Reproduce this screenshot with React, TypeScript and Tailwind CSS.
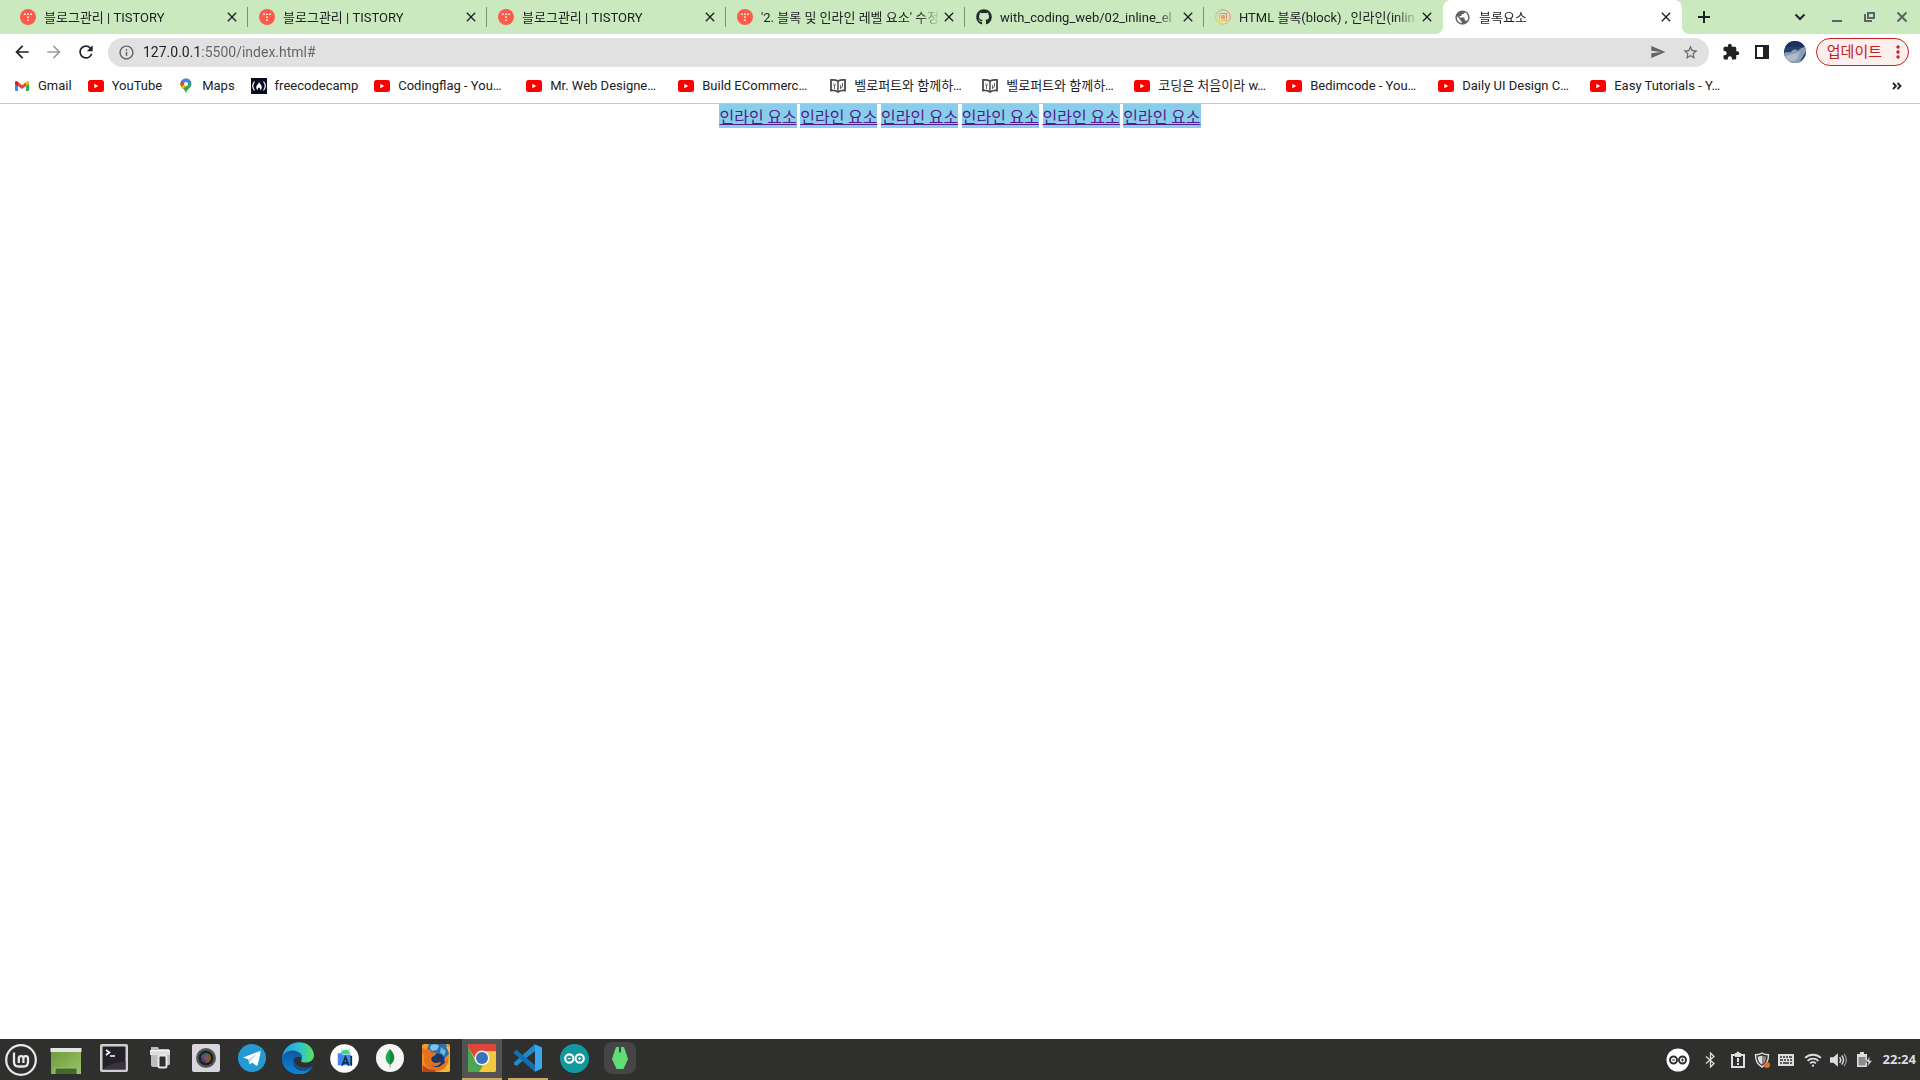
import { useState } from 'react';
import type { ReactNode } from 'react';
import clsx from 'clsx';
import { FaGithub } from 'react-icons/fa';
import {
    MdArrowBack,
    MdArrowForward,
    MdClose,
    MdExtension,
    MdInfoOutline,
    MdPublic,
    MdRefresh,
    MdSend,
    MdStarBorder,
} from 'react-icons/md';

interface Tab {
    title: string;
    icon: ReactNode;
}

interface Bookmark {
    title: string;
    icon: ReactNode;
}

const tabs: Tab[] = [
    { title: '블로그관리 | TISTORY', icon: <TistoryIcon /> },
    { title: '블로그관리 | TISTORY', icon: <TistoryIcon /> },
    { title: '블로그관리 | TISTORY', icon: <TistoryIcon /> },
    { title: "'2. 블록 및 인라인 레벨 요소' 수정", icon: <TistoryIcon /> },
    { title: 'with_coding_web/02_inline_el', icon: <FaGithub className="size-4 text-[#24292f]" /> },
    { title: 'HTML 블록(block) , 인라인(inlin', icon: <ChipIcon /> },
    { title: '블록요소', icon: <MdPublic className="size-[17px] text-[#5f6368]" /> },
];

const bookmarks: Bookmark[] = [
    { title: 'Gmail', icon: <GmailIcon /> },
    { title: 'YouTube', icon: <YoutubeIcon /> },
    { title: 'Maps', icon: <MapsIcon /> },
    { title: 'freecodecamp', icon: <FreeCodeCampIcon /> },
    { title: 'Codingflag - You…', icon: <YoutubeIcon /> },
    { title: 'Mr. Web Designe…', icon: <YoutubeIcon /> },
    { title: 'Build ECommerc…', icon: <YoutubeIcon /> },
    { title: '벨로퍼트와 함께하…', icon: <BookIcon /> },
    { title: '벨로퍼트와 함께하…', icon: <BookIcon /> },
    { title: '코딩은 처음이라 w…', icon: <YoutubeIcon /> },
    { title: 'Bedimcode - You…', icon: <YoutubeIcon /> },
    { title: 'Daily UI Design C…', icon: <YoutubeIcon /> },
    { title: 'Easy Tutorials - Y…', icon: <YoutubeIcon /> },
];

const apps = [
    { name: 'Terminal', icon: <TerminalIcon /> },
    { name: 'Files', icon: <FilesIcon /> },
    { name: 'Camera', icon: <CameraIcon /> },
    { name: 'Telegram', icon: <TelegramIcon /> },
    { name: 'Edge', icon: <EdgeIcon /> },
    { name: 'Android Studio', icon: <AndroidStudioIcon /> },
    { name: 'MongoDB Compass', icon: <MongoIcon /> },
    { name: 'Firefox', icon: <FirefoxIcon /> },
    { name: 'Chrome', icon: <ChromeIcon />, running: true, focused: true },
    { name: 'Visual Studio Code', icon: <VscodeIcon />, running: true },
    { name: 'Arduino', icon: <ArduinoIcon /> },
    { name: 'Mongo Robo', icon: <PlugIcon /> },
];

export default function App() {
    return (
        <div className="flex min-h-screen flex-col bg-white font-[Roboto,'Noto_Sans_CJK_KR',sans-serif] text-[13px] text-[#202124]">
            <TabStrip />
            <Toolbar />
            <BookmarksBar />
            <PageContent />
            <Taskbar />
        </div>
    );
}

function TabStrip() {
    const [active, setActive] = useState(6);

    return (
        <header className="flex h-[34px] items-center bg-[#cbe9bf] pl-[9px]">
            {tabs.map((tab, i) => (
                <div
                    key={i}
                    className={clsx(
                        'relative flex h-full min-w-0 basis-[239px] items-center pr-2 pl-[11px]',
                        i === active && 'rounded-t-lg bg-white'
                    )}
                >
                    <button onClick={() => setActive(i)} className="flex min-w-0 flex-1 items-center gap-2 text-left">
                        <span className="shrink-0">{tab.icon}</span>
                        <span className="flex-1 overflow-hidden mask-r-from-[calc(100%-24px)] pt-px leading-5 whitespace-nowrap">
                            {tab.title}
                        </span>
                    </button>
                    <button aria-label="탭 닫기" className="shrink-0">
                        <MdClose className="size-4" />
                    </button>
                    {i < active - 1 && <span className="absolute top-[7px] right-0 h-5 w-px bg-[#7f8f79]" />}
                    {i === active && (
                        <>
                            <span className="absolute bottom-0 -left-2 size-2 bg-[radial-gradient(circle_at_0_0,transparent_8px,white_8px)]" />
                            <span className="absolute -right-2 bottom-0 size-2 bg-[radial-gradient(circle_at_100%_0,transparent_8px,white_8px)]" />
                        </>
                    )}
                </div>
            ))}
            <button aria-label="새 탭" className="ml-[15px]">
                <svg viewBox="0 0 14 14" className="size-[14px]" stroke="currentColor" strokeWidth="2">
                    <path d="M7 1v12M1 7h12" />
                </svg>
            </button>
            <div className="ml-auto flex items-center gap-4 pr-2.5 text-[#5f6368]">
                <button aria-label="탭 검색" className="mr-1.5 text-[#202124]">
                    <svg viewBox="0 0 16 16" className="size-4" fill="none" stroke="currentColor" strokeWidth="2">
                        <path d="M3.5 5.5 8 10l4.5-4.5" />
                    </svg>
                </button>
                <button aria-label="최소화">
                    <svg viewBox="0 0 16 16" className="size-4" fill="currentColor">
                        <path d="M2 11h10v2H2z" />
                    </svg>
                </button>
                <button aria-label="이전 크기로 복원">
                    <svg viewBox="0 0 16 16" className="size-4" fill="none" stroke="currentColor" strokeWidth="2">
                        <path d="M6 4h6v5H6zM3 5v7h7" />
                    </svg>
                </button>
                <button aria-label="닫기">
                    <svg viewBox="0 0 16 16" className="size-4" fill="none" stroke="currentColor" strokeWidth="2">
                        <path d="m3.500 3.500 9 9m0-9-9 9" />
                    </svg>
                </button>
            </div>
        </header>
    );
}

function Toolbar() {
    const [url, setUrl] = useState('127.0.0.1:5500/index.html#');

    return (
        <div className="flex h-9 items-center pr-[11px] pl-3">
            <nav className="flex gap-3">
                <button aria-label="뒤로">
                    <MdArrowBack className="size-5" />
                </button>
                <button aria-label="앞으로" className="text-[#9e9e9e]">
                    <MdArrowForward className="size-5" />
                </button>
                <button aria-label="새로고침">
                    <MdRefresh className="size-5" />
                </button>
            </nav>
            <div className="ml-3 flex h-[29px] flex-1 items-center rounded-full bg-[#e1e1e1] px-2.5 text-[#5f6368]">
                <MdInfoOutline className="size-[17px] shrink-0" />
                <input
                    aria-label="주소창"
                    value={url}
                    onChange={(e) => setUrl(e.target.value)}
                    className="ml-2 min-w-0 flex-1 bg-[linear-gradient(90deg,#202124_56px,#5f6368_56px)] bg-clip-text text-sm text-transparent caret-black outline-none"
                />
                <button aria-label="공유">
                    <MdSend className="size-4" />
                </button>
                <button aria-label="북마크에 추가" className="ml-4">
                    <MdStarBorder className="size-[17px]" />
                </button>
            </div>
            <div className="flex items-center gap-3.5 pl-[13px]">
                <button aria-label="확장 프로그램">
                    <MdExtension className="size-[18px]" />
                </button>
                <button aria-label="측면 패널">
                    <svg viewBox="0 0 16 16" className="size-4">
                        <path fill="currentColor" fillRule="evenodd" d="M1 1h14v14H1zM3 3v10h6V3z" />
                    </svg>
                </button>
                <button aria-label="프로필">
                    <AvatarIcon />
                </button>
            </div>
            <button className="ml-2.5 flex h-7 items-center gap-3.5 rounded-full border border-[#c5221f] bg-[#fcefee] pr-2 pl-2.5 text-[15px] text-[#c5221f]">
                업데이트
                <svg viewBox="0 0 4 14" className="h-[14px] w-1" fill="currentColor">
                    <circle cx="2" cy="2" r="1.700" />
                    <circle cx="2" cy="7" r="1.700" />
                    <circle cx="2" cy="12" r="1.700" />
                </svg>
            </button>
        </div>
    );
}

function BookmarksBar() {
    return (
        <div className="flex h-[34px] items-center border-b border-[#c8c8c8] pr-[18px] pb-0.5 pl-3.5">
            <ul className="flex min-w-0 flex-1 gap-4 overflow-hidden whitespace-nowrap">
                {bookmarks.map((b, i) => (
                    <li key={i}>
                        <a href="#" className="flex items-center gap-2 leading-5">
                            {b.icon}
                            <span className={clsx(b.title.endsWith('…') && 'w-28')}>{b.title}</span>
                        </a>
                    </li>
                ))}
            </ul>
            <button aria-label="북마크 더보기">
                <svg viewBox="0 0 10 8" className="h-2 w-2.5" fill="none" stroke="currentColor" strokeWidth="1.800">
                    <path d="m1 1 3 3-3 3M5.500 1l3 3-3 3" />
                </svg>
            </button>
        </div>
    );
}

function PageContent() {
    return (
        <main className="flex-1 text-center font-['Noto_Sans_CJK_KR',sans-serif] text-base leading-6">
            {Array.from({ length: 6 }, (_, i) => (
                <span key={i}>
                    <a href="#" className="bg-[#87ceeb] text-[#551a8b] underline">
                        인라인 요소
                    </a>{' '}
                </span>
            ))}
        </main>
    );
}

function Taskbar() {
    return (
        <footer className="flex h-[41px] items-center bg-[#2f2f2e] text-[#dedede]">
            <button aria-label="메뉴" className="flex w-[42px] justify-center">
                <MintIcon />
            </button>
            <button aria-label="바탕 화면 보기" className="flex w-12 justify-center">
                <DesktopIcon />
            </button>
            <div className="flex h-full gap-1.5 pl-1">
                {apps.map((app) => (
                    <button
                        key={app.name}
                        aria-label={app.name}
                        className={clsx(
                            'flex w-10 items-center justify-center border-b-2 pb-px',
                            app.running ? 'border-b-[#c8a95f]' : 'border-b-transparent',
                            app.focused && 'bg-[#535353]'
                        )}
                    >
                        {app.icon}
                    </button>
                ))}
            </div>
            <Tray />
        </footer>
    );
}

function Tray() {
    return (
        <div className="ml-auto flex items-center gap-2 pr-1">
            <svg viewBox="0 0 24 24" className="mr-1 size-6">
                <circle cx="12" cy="12" r="11.500" fill="#fff" />
                <g fill="none" stroke="#2f2f2e" strokeWidth="2">
                    <circle cx="7.500" cy="12" r="3.500" />
                    <circle cx="16.500" cy="12" r="3.500" />
                </g>
                <path d="M6 12h3m6 0h3m-1.500-1.500v3" stroke="#2f2f2e" />
            </svg>
            <svg viewBox="0 0 16 16" className="mr-1 size-4" fill="none" stroke="currentColor" strokeWidth="1.300">
                <path d="m4 4.500 8 7L8.500 15V1L12 4.500l-8 7" />
            </svg>
            <svg viewBox="0 0 16 18" className="h-[18px] w-4">
                <path d="M2 4h12v12H2z" fill="none" stroke="currentColor" strokeWidth="2" />
                <path d="M5 2h1.500a1.500 1.500 0 0 1 3 0H11v4H5zM7 7h2v4H7zm0 5h2v2H7z" fill="currentColor" />
            </svg>
            <svg viewBox="0 0 16 16" className="size-4">
                <path d="M8 1c2 1.500 4.500 1.800 6.500 1.800C14.500 9 13 12.500 8 15 3 12.500 1.500 9 1.500 2.800 3.500 2.800 6 2.500 8 1z" fill="none" stroke="currentColor" strokeWidth="1.400" />
                <path d="M8 3.500c1.500.8 3 1 4.300 1.100C12.200 8.600 11 11 8 12.700z" fill="#888" />
                <path d="M8 3.500c-1.500.8-3 1-4.300 1.100C3.800 8.600 5 11 8 12.700z" fill="currentColor" />
                <circle cx="13" cy="13" r="3" fill="#e0702f" />
            </svg>
            <svg viewBox="0 0 16 16" className="size-4">
                <path d="M0 2h16v12H0z" fill="currentColor" />
                <path d="M2 5h2m1 0h2m1 0h2m1 0h3M2 8h3m1 0h2m1 0h2m1 0h2M2 11h2m1 0h6m1 0h2" stroke="#2f2f2e" strokeWidth="1.500" />
            </svg>
            <svg viewBox="0 0 16 16" className="ml-0.5 size-[18px]" fill="none" stroke="currentColor" strokeWidth="1.600">
                <path d="M1 6.200a10 10 0 0 1 14 0M3.200 8.700a6.800 6.800 0 0 1 9.600 0M5.400 11a3.700 3.700 0 0 1 5.200 0" />
                <circle cx="8" cy="13" r="1" fill="currentColor" stroke="none" />
            </svg>
            <svg viewBox="0 0 16 16" className="size-[18px]" fill="none">
                <path d="M0 5.500h3L7 2v12l-4-3.500H0z" fill="currentColor" />
                <path d="M8.500 5.500q2 2.500 0 5M10.500 4q3 4 0 8" stroke="currentColor" strokeWidth="1.300" />
                <path d="M12.500 2.500q4 5.500 0 11" stroke="#888" strokeWidth="1.300" />
            </svg>
            <svg viewBox="0 0 17 17" className="size-[17px]">
                <path d="M4 1h4v2h3v13H1V3h3z" fill="currentColor" />
                <path d="M2.500 6h7v8.500h-7z" fill="#8c8c8c" />
                <path d="m14 5-4.500 6h2.800L11 16l5.500-6.500h-3z" fill="currentColor" stroke="#2f2f2e" strokeWidth=".6" />
            </svg>
            <time className="ml-0.5 font-['Noto_Sans',sans-serif] text-[13px] font-bold">22:24</time>
        </div>
    );
}

function TistoryIcon() {
    return (
        <svg viewBox="0 0 16 16" className="size-4">
            <circle cx="8" cy="8" r="8" fill="#ff5a4a" />
            <g fill="#fff">
                <circle cx="5" cy="5.200" r=".9" />
                <circle cx="8" cy="5.200" r=".9" />
                <circle cx="11" cy="5.200" r=".9" />
                <circle cx="8" cy="8.200" r=".9" />
                <circle cx="8" cy="11.200" r=".9" />
            </g>
        </svg>
    );
}

function ChipIcon() {
    return (
        <svg viewBox="0 0 16 16" className="size-4" fill="none">
            <defs>
                <linearGradient id="chip" x1="1" y1="0" x2="0" y2="1">
                    <stop stopColor="#e7788a" />
                    <stop offset="1" stopColor="#f0cf55" />
                </linearGradient>
            </defs>
            <circle cx="8" cy="8" r="7.300" stroke="url(#chip)" />
            <path d="M4.500 4.500h7v7h-7z" stroke="url(#chip)" />
            <path d="M6 6h4v4H6z" fill="#eda070" />
        </svg>
    );
}

function YoutubeIcon() {
    return (
        <svg viewBox="0 0 16 16" className="size-4 shrink-0">
            <rect y="2" width="16" height="12" rx="2.500" fill="#f00" />
            <path d="M6.300 5.700v4.600l4-2.300z" fill="#fff" />
        </svg>
    );
}

function GmailIcon() {
    return (
        <svg viewBox="0 0 16 16" className="size-4 shrink-0">
            <path d="M1 4.500V12q0 1 1 1h2V6.500z" fill="#4285f4" />
            <path d="M15 4.500V12q0 1-1 1h-2V6.500z" fill="#34a853" />
            <path d="M12 4.200V8l3-2.300V4.300c0-1.300-1.300-1.800-2.200-1.100z" fill="#fbbc04" />
            <path d="M1 4.300v1.400L8 11l4-3V4.200L8 7.200 3.200 3.300C2.300 2.600 1 3 1 4.300z" fill="#ea4335" />
            <path d="M1 4.300v1.400L4 8V4z" fill="#c5221f" />
        </svg>
    );
}

function MapsIcon() {
    return (
        <svg viewBox="0 0 16 16" className="size-4 shrink-0">
            <path d="M8 .5A5.500 5.500 0 0 0 2.500 6c0 4 4.500 4.500 5.500 9.500 1-5 5.500-5.500 5.500-9.500A5.500 5.500 0 0 0 8 .5z" fill="#34a853" />
            <path d="M8 .5A5.500 5.500 0 0 0 3.700 2.500L8 6l3.500-4.200A5.500 5.500 0 0 0 8 .5z" fill="#4285f4" />
            <path d="M3.700 2.500A5.500 5.500 0 0 0 3.200 8.700L7.500 5.500z" fill="#ea4335" />
            <path d="m3.200 8.700 1.700 2.100L9.600 7.200 8 5.500z" fill="#fbbc04" />
            <path d="m11.500 1.800-3.500 4L9.600 7.200l3.600-3.100z" fill="#4285f4" />
            <circle cx="8" cy="6" r="2" fill="#fff" />
        </svg>
    );
}

function FreeCodeCampIcon() {
    return (
        <svg viewBox="0 0 16 16" className="size-4 shrink-0">
            <path d="M0 0h16v16H0z" fill="#0a0a23" />
            <path d="M3.500 3.500q-3.500 4.500 0 9m9-9q3.500 4.500 0 9" fill="none" stroke="#fff" strokeWidth="1.200" />
            <path d="M8 3.500c0 2 2.800 3 2.800 5.800 0 1.500-.8 2.500-1.800 3 .6-1.600 0-2.300-1-2.800-1 .5-1.600 1.200-1 2.800-1-.5-1.800-1.500-1.800-3C5.200 7 8 6 8 3.500z" fill="#fff" />
        </svg>
    );
}

function BookIcon() {
    return (
        <svg viewBox="0 0 16 16" className="size-4 shrink-0" fill="none" stroke="#4a4a4a">
            <path d="M1 2q4-.5 7 1 3-1.500 7-1v10.500q-4-.5-7 1.500-3-2-7-1.500z" strokeWidth="1.800" />
            <path d="M8 3v11" strokeWidth="1.500" />
            <path d="M3.500 5.500 4.500 8l1-2m-1 2v3M10.500 7v4m2-6v4l-2 .5" strokeWidth=".8" />
        </svg>
    );
}

function AvatarIcon() {
    return (
        <svg viewBox="0 0 22 22" className="size-[22px]">
            <clipPath id="avatar">
                <circle cx="11" cy="11" r="11" />
            </clipPath>
            <g clipPath="url(#avatar)">
                <path d="M0 0h22v22H0z" fill="#24426f" />
                <path d="M0 0h22v6H0z" fill="#1b335c" />
                <path d="M0 13c1-3 5-1 7-2 2-3 5-3 7-1 2-3 5-4 8-4v5c-3 2-3 7-8 11H0z" fill="#8c9db5" />
                <path d="M1 16c3-3 6-1 7-3 3 1 5-2 8-2-2 3-1 6-5 9H4z" fill="#b0bac8" />
            </g>
        </svg>
    );
}

function MintIcon() {
    return (
        <svg viewBox="0 0 32 32" className="size-8" fill="none" stroke="#e8e8e8">
            <circle cx="16" cy="16" r="14.800" strokeWidth="2.200" />
            <path d="M9 8.500V18q0 4.500 4.500 4.500h5q4.500 0 4.500-4.500v-3.500q0-2.300-2.300-2.300t-2.300 2.300V19m0-4.500q0-2.300-2.300-2.300t-2.300 2.300V19" strokeWidth="2.300" />
        </svg>
    );
}

function DesktopIcon() {
    return (
        <svg viewBox="0 0 32 32" className="mt-0.5 size-8">
            <defs>
                <linearGradient id="desk" x2="1" y2="1">
                    <stop stopColor="#6c9a3d" />
                    <stop offset="1" stopColor="#9ac466" />
                </linearGradient>
            </defs>
            <path d="M1 4h30v25H1z" fill="url(#desk)" />
            <path d="M.5 3h31v4H.5z" fill="#e4e4e4" />
            <path d="M5 29v-6h22v6" fill="#45682a" stroke="#9bc16c" />
        </svg>
    );
}

function TerminalIcon() {
    return (
        <svg viewBox="0 0 28 28" className="size-7">
            <rect width="28" height="28" rx="2" fill="#d0d0d0" />
            <path d="M2.500 2.500h23v23h-23z" fill="#24212b" />
            <path d="M2.500 25.500c4-4 14-8 23-8v8z" fill="#39333f" />
            <path d="m6 6 3.500 2.500L6 11M10 12h5" fill="none" stroke="#fff" strokeWidth="1.600" />
        </svg>
    );
}

function FilesIcon() {
    return (
        <svg viewBox="0 0 24 24" className="size-6">
            <path d="M3 1h7l1 2h10v5h1v10q0 1-1 1h-3v2H5q-2 0-2-2z" fill="#bdbdbd" />
            <path d="M2 4h20v5H2z" fill="#dedede" />
            <path d="M2 4h20v1.200H2z" fill="#f5f5f5" />
            <rect x="10.500" y="9.500" width="8" height="12" rx="1.500" fill="#2f2f2e" stroke="#e8e8e8" strokeWidth="2" />
        </svg>
    );
}

function CameraIcon() {
    return (
        <svg viewBox="0 0 28 28" className="size-7">
            <rect width="28" height="28" rx="2" fill="#d8d5dd" />
            <circle cx="14" cy="14" r="10" fill="#55565a" />
            <circle cx="14" cy="14" r="7.500" fill="#222127" />
            <path d="M14 14V9a5 5 0 0 1 5 5z" fill="#576b2d" />
            <path d="M14 14h5a5 5 0 0 1-5 5z" fill="#93512e" />
            <path d="M14 14v5a5 5 0 0 1-5-5z" fill="#533a86" />
            <path d="M14 14H9a5 5 0 0 1 5-5z" fill="#2e6572" />
            <circle cx="14" cy="14" r="2" fill="#8c4f6f" />
        </svg>
    );
}

function TelegramIcon() {
    return (
        <svg viewBox="0 0 28 28" className="size-7">
            <circle cx="14" cy="14" r="14" fill="#2499d3" />
            <path d="m5 13.500 16.500-6.300c.8-.3 1.400.2 1.100 1.200l-2.800 12.400c-.2 1-.9 1.200-1.700.7l-4.200-3.100-2.300 2.100-1-4.900z" fill="#fff" />
            <path d="m10 15.800 9.300-6.200-7.200 7.300-.5 3.600z" fill="#b5d5e8" />
        </svg>
    );
}

function EdgeIcon() {
    return (
        <svg viewBox="0 0 32 32" className="size-8">
            <defs>
                <linearGradient id="edgeTop">
                    <stop stopColor="#239be0" />
                    <stop offset=".55" stopColor="#2bc3d2" />
                    <stop offset="1" stopColor="#5be05a" />
                </linearGradient>
                <linearGradient id="edgeBody" x2="0" y2="1">
                    <stop stopColor="#0c59a4" />
                    <stop offset="1" stopColor="#0f86dc" />
                </linearGradient>
            </defs>
            <path d="M0 16C2-4 30-5 32 13c.3 6-6 9-12 7-2-1 0-2 0-5-1-5-7-7-11-6-5 1-8 4-9 7z" fill="url(#edgeTop)" />
            <path d="M0 15.500C2 10 8 8 12 9c5 1 8 3 8 7-5-3-9 0-8.500 5C12 27 19 30 25 28c3-1 5-3 6-4C27 32 19 33 14 32 6 31-1 24 0 15.500z" fill="url(#edgeBody)" />
            <path d="M12 16c-2 6 2 12 11 12 3 0 6-2 7.500-3.500.5-.6 0-1.200-.7-.7C22 28 12 25 12 16z" fill="#174f91" />
        </svg>
    );
}

function AndroidStudioIcon() {
    return (
        <svg viewBox="0 0 30 30" className="size-[29px]">
            <circle cx="15" cy="15" r="14.800" fill="#fff" />
            <path d="M11 10.500a5 4.500 0 0 1 10 0z" fill="#3ddc84" />
            <path d="m11.500 5 1.500 2.500m7.500-2.500L19 7.500" stroke="#3ddc84" strokeWidth=".8" />
            <path d="M8 9.500h4l1 1.500h9v11H8z" fill="#4285f4" />
            <path d="m12.500 22.500 3.500-9 3.500 9m-5.500-3h4m4-7v10" fill="none" stroke="#073042" strokeWidth="1.800" />
        </svg>
    );
}

function MongoIcon() {
    return (
        <svg viewBox="0 0 28 28" className="size-7">
            <circle cx="14" cy="14" r="14" fill="#f5f5f5" />
            <path d="M14 5c-6 6-5.500 12 0 16z" fill="#1ba64c" />
            <path d="M14 5c6 6 5.500 12 0 16z" fill="#12883c" />
            <path d="M14 20v4" stroke="#9aa" />
        </svg>
    );
}

function FirefoxIcon() {
    return (
        <svg viewBox="0 0 28 28" className="size-7">
            <clipPath id="firefox">
                <rect width="28" height="28" rx="2" />
            </clipPath>
            <g clipPath="url(#firefox)">
                <path d="M0 0h28v28H0z" fill="#ee9a2c" />
                <path d="M7 0h17l2 6 2 3-4 4-6 9-11-6-3-8z" fill="#2f6fa8" />
                <path d="M9 1c3-1 6-1 8 1l-2 4-5 1-2-3z" fill="#7fc4e3" />
                <path d="m19 3 5 4-2 5-4-4z" fill="#6cb6dc" />
                <path d="M12 9c4 0 8 1 10 4l1 6-7 5-7-2-1-6z" fill="#1d3768" />
                <path d="M0 4c3 2 5 2 8 1l1 3 6 1-3 3-2 1c-2 3 1 6 4 6 2 0 3-1 5-1-1 4-6 5-10 3 6 5 15 1 16-9 1 2 1 4 1 6l-4 7-9 3H6L0 22z" fill="#e5701e" />
                <path d="M0 8c2 3 3 4 2 9 1 4 4 7 8 9H0z" fill="#f08c25" />
                <path d="M24 3c3 4 4 9 3 14-1 6-6 9-10 11h11V3z" fill="#f5b935" />
                <path d="M1 21c3 3 7 5 12 5v2H0z" fill="#b9461a" />
            </g>
        </svg>
    );
}

function ChromeIcon() {
    return (
        <svg viewBox="0 0 28 28" className="size-7">
            <clipPath id="chrome">
                <rect width="28" height="28" rx="2" />
            </clipPath>
            <g clipPath="url(#chrome)">
                <path d="M0 0h28v28H0z" fill="#f2c330" />
                <path d="M0 0h28v7H14L7 14 0 3z" fill="#dd4638" />
                <path d="M0 2.500 8 18l7 3-4 7H0z" fill="#4ea551" />
                <path d="M28 8H14v6l6 3-7 11h15z" fill="#f3ca3e" />
            </g>
            <circle cx="14" cy="14" r="7.500" fill="#f3f3f3" />
            <circle cx="14" cy="14" r="6" fill="#3873b9" />
        </svg>
    );
}

function VscodeIcon() {
    return (
        <svg viewBox="0 0 28 28" className="size-7">
            <path d="M21 0 0 18.500v2L2.500 22 21 7z" fill="#2489ca" />
            <path d="M21 28 0 9.500v-2L2.500 6 21 21z" fill="#1070b3" />
            <path d="M20 0 28 3.500v21L20 28c.8-.3 1-1 1-2V2c0-1-.2-1.700-1-2z" fill="#38a9f0" />
        </svg>
    );
}

function ArduinoIcon() {
    return (
        <svg viewBox="0 0 28 28" className="size-[29px]">
            <circle cx="14" cy="14" r="14" fill="#12999f" />
            <g fill="none" stroke="#fff" strokeWidth="2">
                <circle cx="9" cy="14" r="4" />
                <circle cx="19" cy="14" r="4" />
            </g>
            <path d="M7.500 14h3m7 0h3M19 12.500v3" stroke="#fff" />
        </svg>
    );
}

function PlugIcon() {
    return (
        <svg viewBox="0 0 32 32" className="size-8">
            <rect width="32" height="32" rx="8" fill="#454545" />
            <path d="M12 5h3v5q1 1.500 2 0V5h3l4 12-4.500 10h-7L8 17z" fill="#5fdd77" />
        </svg>
    );
}
